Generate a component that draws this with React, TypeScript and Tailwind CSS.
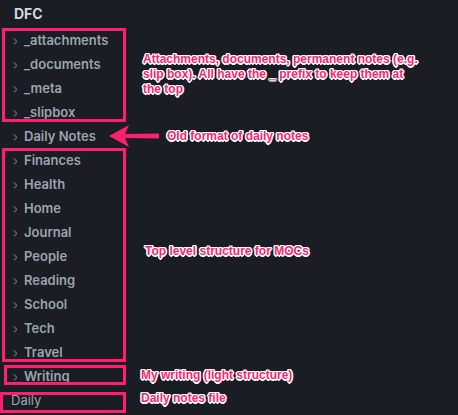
import { ChevronRight } from 'lucide-react';

const folders = [
  '_attachments', '_documents', '_meta', '_slipbox', 'Daily Notes',
  'Finances', 'Health', 'Home', 'Journal', 'People', 'Reading',
  'School', 'Tech', 'Travel', 'Writing',
];

// pink callout text with a white outline, as drawn over the screenshot
const note = "absolute font-['Liberation_Sans',Arial,sans-serif] text-[12px] leading-[15px] font-bold text-[#ff1f6f] [text-shadow:1.5px_0_0_#fff,-1.5px_0_0_#fff,0_1.5px_0_#fff,0_-1.5px_0_#fff,1px_1px_0_#fff,-1px_-1px_0_#fff,1px_-1px_0_#fff,-1px_1px_0_#fff]";
const box = 'absolute border-[3px] border-[#ff1f6f]';

export default function App() {
  return (
    <div className="relative w-[458px] h-[415px] overflow-hidden bg-[#1a1d23] font-['Inter',sans-serif]">
      {/* file tree */}
      <div className="pt-[3px]">
        <div className="pl-[14px] h-[20px] flex items-center text-[14px] font-bold text-[#d3d7dd]">DFC</div>
        <div className="mt-[6px] flex flex-col">
          {folders.map((f) => (
            <div key={f} className="h-[24px] flex items-center pl-[10px] gap-[3px] text-[13px] font-semibold text-[#9aa4b0]">
              <ChevronRight className="w-[11px] h-[11px] text-[#5a626d]" strokeWidth={2.5} />
              <span>{f}</span>
            </div>
          ))}
          <div className="h-[24px] flex items-center pl-[11px] text-[13px] text-[#9aa4b0]">Daily</div>
        </div>
      </div>

      {/* annotation boxes */}
      <div className={`${box} left-[2px] top-[28px] w-[124px] h-[94px]`} />
      <div className={`${box} left-[2px] top-[148px] w-[124px] h-[214px]`} />
      <div className={`${box} left-[4px] top-[365px] w-[122px] h-[20px]`} />
      <div className={`${box} left-[0px] top-[392px] w-[126px] h-[21px]`} />

      {/* arrow */}
      <svg className="absolute left-[106px] top-[123px]" width="56" height="26" viewBox="0 0 56 26">
        <path d="M3 13 L23 2 L19 11 L53 10.5 L53 15.5 L19 15 L23 24 Z" fill="#ff1f6f" />
      </svg>

      {/* annotation labels */}
      <div className={`${note} left-[143px] top-[52px] whitespace-nowrap`}>
        Attachments, documents, permanent notes (e.g.<br />
        slip box). All have the _ prefix to keep them at<br />
        the top
      </div>
      <div className={`${note} left-[167px] top-[129px]`}>Old format of daily notes</div>
      <div className={`${note} left-[145px] top-[244px]`}>Top level structure for MOCs</div>
      <div className={`${note} left-[141px] top-[368px]`}>My writing (light structure)</div>
      <div className={`${note} left-[141px] top-[391px]`}>Daily notes file</div>
    </div>
  );
}
